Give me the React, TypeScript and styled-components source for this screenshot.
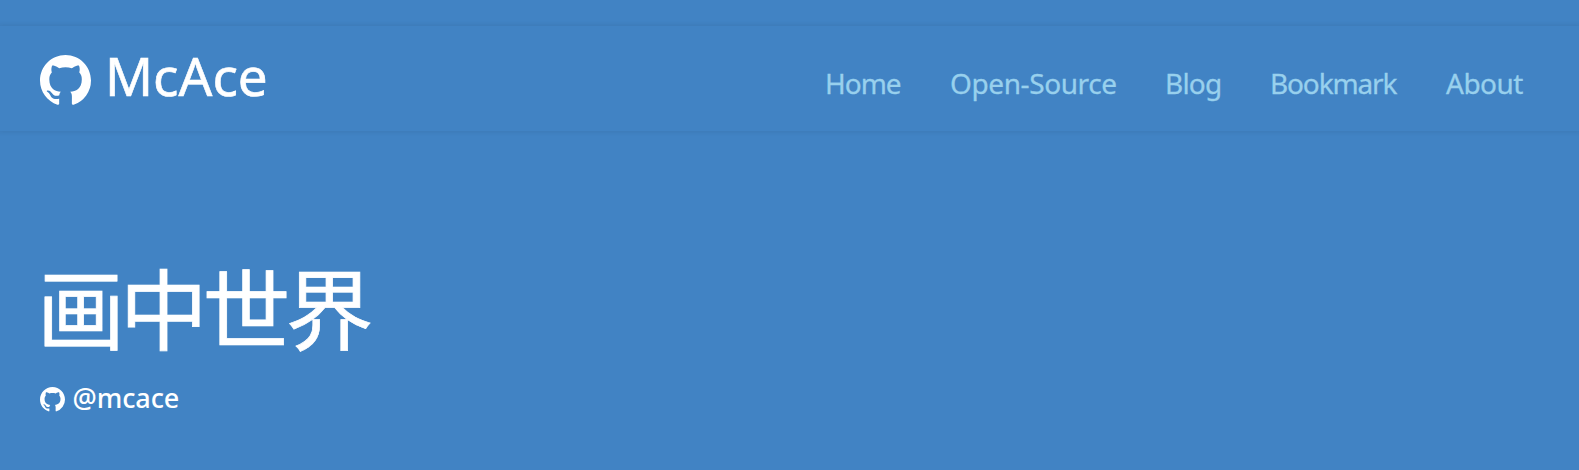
import React from "react";
import styled, { createGlobalStyle } from "styled-components";

const Global = createGlobalStyle`
  * { box-sizing: border-box; }
  body { margin: 0; background: #4183c4; font-family: "Open Sans", "Noto Sans CJK SC", sans-serif; }
`;
const Page = styled.div`
  height: 470px;
  padding-top: 26px;
  overflow: hidden;
  background: #4183c4;
  color: #fff;
`;
const Header = styled.header`
  display: flex;
  justify-content: space-between;
  height: 105px;
  padding: 0 55px 0 40px;
  background: #4183c4;
  box-shadow: 0 0 5px 1px rgba(0, 0, 0, 0.08);
`;
const Brand = styled.a`
  display: flex;
  gap: 14px;
  padding-top: 29px;
`;
const BrandName = styled.span`
  margin-top: -15px;
  font: 400 53px/72px "Noto Sans", sans-serif;
  -webkit-text-stroke: 0.6px currentColor;
`;
const Nav = styled.nav`
  display: grid;
  grid-template-columns: 125px 215px 105px 176px 78px;
  padding-top: 37px;
`;
const NavLink = styled.a<{ $tracking: number }>`
  color: #98d0ed;
  font: 400 28px/40px "Noto Sans", sans-serif;
  -webkit-text-stroke: 0.3px currentColor;
  letter-spacing: ${(p) => p.$tracking}px;
  white-space: nowrap;
`;
const Hero = styled.main`
  padding: 124px 37px 0;
`;
const Title = styled.h1`
  margin: 0;
  font: 400 88px/100px "Noto Sans CJK SC", sans-serif;
  letter-spacing: -5.2px;
  -webkit-text-stroke: 0.7px currentColor;
`;
const Handle = styled.a`
  display: flex;
  align-items: center;
  gap: 8px;
  margin: 25px 0 0 2.5px;
  font: 500 27px/40px "Noto Sans", sans-serif;
`;
const HandleName = styled.span`
  margin-top: -2px;
  letter-spacing: -0.1px;
`;
const Mark = styled.svg<{ $size: number }>`
  width: ${(p) => p.$size}px;
  height: ${(p) => p.$size}px;
  flex: none;
  fill: currentColor;
`;
const GithubMark = ({ size }: { size: number }) => (
  <Mark $size={size} viewBox="0 0 16 16">
    <path d="M8 0C3.58 0 0 3.58 0 8c0 3.54 2.29 6.53 5.47 7.59.4.07.55-.17.55-.38 0-.19-.01-.82-.01-1.49-2.01.37-2.53-.49-2.69-.94-.09-.23-.48-.94-.82-1.13-.28-.15-.68-.52-.01-.53.63-.01 1.08.58 1.23.82.72 1.21 1.87.87 2.33.66.07-.52.28-.87.51-1.07-1.78-.2-3.64-.89-3.64-3.95 0-.87.31-1.59.82-2.15-.08-.2-.36-1.02.08-2.12 0 0 .67-.21 2.2.82.64-.18 1.32-.27 2-.27s1.36.09 2 .27c1.53-1.04 2.2-.82 2.2-.82.44 1.1.16 1.92.08 2.12.51.56.82 1.27.82 2.15 0 3.07-1.87 3.75-3.65 3.95.29.25.54.73.54 1.48 0 1.07-.01 1.93-.01 2.2 0 .21.15.46.55.38A8.01 8.01 0 0 0 16 8c0-4.42-3.58-8-8-8Z" />
  </Mark>
);
const links = [
  { label: "Home", tracking: -1 },
  { label: "Open-Source", tracking: -0.4 },
  { label: "Blog", tracking: -0.8 },
  { label: "Bookmark", tracking: -1.15 },
  { label: "About", tracking: -0.5 },
];

export default function App() {
  return (
    <Page>
      <Global />
      <Header>
        <Brand><GithubMark size={51} /><BrandName>McAce</BrandName></Brand>
        <Nav>
          {links.map((l) => <NavLink key={l.label} $tracking={l.tracking}>{l.label}</NavLink>)}
        </Nav>
      </Header>
      <Hero>
        <Title>画中世界</Title>
        <Handle><GithubMark size={25} /><HandleName>@mcace</HandleName></Handle>
      </Hero>
    </Page>
  );
}
